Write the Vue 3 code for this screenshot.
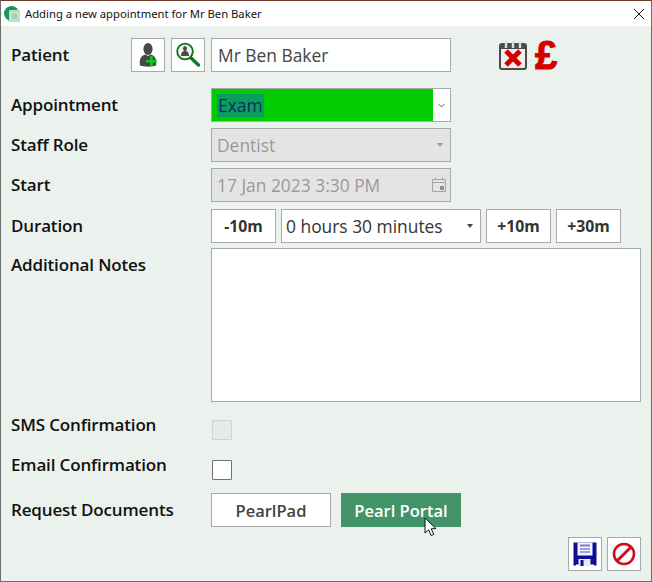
<script setup>
const durationButtons = ['+10m', '+30m']
</script>

<template>
  <div class="window">
    <header class="titlebar">
      <svg class="app-icon" width="16" height="16" viewBox="0 0 16 16">
        <circle cx="7.5" cy="7.5" r="7.5" fill="#0f9a5c" />
        <rect x="5" y="4" width="11" height="12" rx="1" fill="#bcdcc8" />
        <rect x="7" y="7" width="7" height="7" fill="#a5cfb3" stroke="#d6e9dc" />
      </svg>
      <span class="title">Adding a new appointment for Mr Ben Baker</span>
      <svg class="close" width="12" height="12" viewBox="0 0 12 12">
        <path d="M1 1 L11 11 M11 1 L1 11" stroke="#111" stroke-width="1" fill="none" />
      </svg>
    </header>

    <main class="form">
      <section class="row patient-row">
        <label class="label patient-label">Patient</label>
        <div class="patient-controls">
          <button class="icon-btn">
            <svg width="24" height="26" viewBox="0 0 24 26">
              <ellipse cx="12" cy="7" rx="4.6" ry="6" fill="#474747" />
              <path d="M4 23.5 C3 17 5 13.5 9.5 12.5 L12 14 L14.5 12.5 C19 13.5 21 17 20 23.5 C16 25 8 25 4 23.5 Z" fill="#474747" />
              <path d="M15.4 14 V24.5 M10 19.2 H20.8" stroke="#17c52b" stroke-width="2.6" fill="none" />
            </svg>
          </button>
          <button class="icon-btn">
            <svg width="26" height="26" viewBox="0 0 26 26">
              <path d="M15 15 L23.5 23" stroke="#0f7a1d" stroke-width="3.4" stroke-linecap="round" />
              <circle cx="10" cy="9.5" r="7.8" fill="#eef3ee" stroke="#0c6f12" stroke-width="1.8" />
              <ellipse cx="10" cy="6.6" rx="2" ry="2.6" fill="#4a4a4a" />
              <path d="M6 14 C6 10 8 9 10 9 C12 9 14 10 14 14 Z" fill="#4a4a4a" />
            </svg>
          </button>
          <div class="field patient-name">Mr Ben Baker</div>
          <svg class="cal-x" width="28" height="30" viewBox="0 0 28 30">
            <rect x="1" y="4" width="26" height="25" rx="2" fill="#f0f0f0" stroke="#4a4a4a" stroke-width="2" />
            <rect x="1" y="4" width="26" height="5" fill="#4a4a4a" />
            <path d="M7 1 v7 M14 1 v7 M21 1 v7" stroke="#dcdcdc" stroke-width="2.5" />
            <path d="M7 11 L21 25 M21 11 L7 25" stroke="#d40000" stroke-width="5" />
          </svg>
          <span class="pound">£</span>
        </div>
      </section>

      <section class="row appointment-row">
        <label class="label">Appointment</label>
        <div class="field select appointment">
          <div class="green"><span class="selected">Exam</span></div>
          <svg class="chevron" width="7" height="5" viewBox="0 0 7 5">
            <path d="M0.5 1 L3.5 4 L6.5 1" fill="none" stroke="#666" stroke-width="1" />
          </svg>
        </div>
      </section>

      <section class="row staff-row">
        <label class="label">Staff Role</label>
        <div class="field select disabled">
          <span>Dentist</span>
          <i class="caret caret-muted"></i>
        </div>
      </section>

      <section class="row start-row">
        <label class="label">Start</label>
        <div class="field select disabled">
          <span>17 Jan 2023 3:30 PM</span>
          <svg class="date-icon" width="14" height="15" viewBox="0 0 14 15">
            <path d="M0.5 2.5 H13.5 V14.5 H0.5 Z M0.5 5.5 H13.5" fill="none" stroke="#a4a4a4" />
            <path d="M3.5 0.5 V3 M10.5 0.5 V3" stroke="#a4a4a4" />
            <rect x="8" y="9" width="4" height="4" fill="#8f8f8f" />
          </svg>
        </div>
      </section>

      <section class="row duration-row">
        <label class="label">Duration</label>
        <div class="duration-controls">
          <button class="step">-10m</button>
          <div class="field select duration">
            <span>0 hours 30 minutes</span>
            <i class="caret"></i>
          </div>
          <button v-for="item in durationButtons" :key="item" class="step">{{ item }}</button>
        </div>
      </section>

      <section class="row notes-row">
        <label class="label">Additional Notes</label>
        <textarea class="notes"></textarea>
      </section>

      <section class="row sms-row">
        <label class="label">SMS Confirmation</label>
        <span class="check check-disabled"></span>
      </section>

      <section class="row email-row">
        <label class="label">Email Confirmation</label>
        <span class="check"></span>
      </section>

      <section class="row docs-row">
        <label class="label">Request Documents</label>
        <div class="docs">
          <button class="doc">PearlPad</button>
          <button class="doc doc-active">Pearl Portal</button>
          <svg class="cursor" width="15" height="20" viewBox="0 0 15 20">
            <path d="M1 1 V16 L4.6 12.8 L7.2 18.6 L9.8 17.4 L7.2 11.8 L12 11.6 Z" fill="#fff" stroke="#111" stroke-width="1" />
          </svg>
        </div>
      </section>

      <footer class="actions">
        <button class="icon-btn">
          <svg width="24" height="24" viewBox="0 0 24 24">
            <path d="M0.5 0.5 H23.5 V23.5 H21 V22.5 H3 V23.5 H0.5 Z" fill="#0d0d96" />
            <rect x="4.5" y="0.5" width="15" height="13" fill="#f2f4fb" />
            <path d="M7 3.5 H17" stroke="#7b7bd0" stroke-width="2" />
            <path d="M7 7 H17 M7 10 H17" stroke="#4b4bb8" stroke-width="1" />
            <rect x="5.5" y="17" width="12" height="7" fill="#e8eaf6" />
            <rect x="7.5" y="18" width="3" height="6" fill="#0d0d96" />
          </svg>
        </button>
        <button class="icon-btn">
          <svg width="26" height="26" viewBox="0 0 26 26">
            <circle cx="13" cy="13" r="10" fill="#fff" stroke="#cc0f1c" stroke-width="2.6" />
            <path d="M6.5 19.5 L19.5 6.5" stroke="#cc0f1c" stroke-width="3" />
          </svg>
        </button>
      </footer>
    </main>
  </div>
</template>

<style>
html, body { margin: 0; padding: 0; background: #ebf1ed; }
</style>

<style scoped>
* { box-sizing: border-box; }

.window {
  width: 652px;
  height: 582px;
  display: flex;
  flex-direction: column;
  overflow: hidden;
  position: relative;
  background: #ebf1ed;
  border-top: 1px solid #6e3a2a;
  border-left: 1px solid #6d6d6d;
  border-right: 1px solid #6d6d6d;
  border-bottom: 1px solid #6d6d6d;
  font-family: "Open Sans", "Noto Sans", sans-serif;
  color: #111;
}

.titlebar {
  height: 25px;
  flex: none;
  display: flex;
  align-items: center;
  background: #fff;
  padding-left: 3px;
}
.app-icon { margin-right: 5px; flex: none; }
.title { font: 11.25px/16px "Noto Sans", sans-serif; color: #111; }
.close { margin-left: auto; margin-right: 6px; }

.form {
  flex: 1;
  padding: 12px 10px 0 10px;
  display: flex;
  flex-direction: column;
}

.row { display: flex; align-items: flex-start; flex: none; }
.label {
  width: 200px;
  flex: none;
  font: 600 17px/34px "Open Sans", sans-serif;
  letter-spacing: -0.15px;
  color: #111;
  white-space: nowrap;
}

.patient-row { height: 34px; }
.patient-label { width: 120px; }
.patient-controls { display: flex; align-items: center; }
.patient-controls .icon-btn + .icon-btn { margin-left: 6px; }
.patient-name {
  margin-left: 6px;
  color: #444;
  padding-left: 6px;
  font-size: 17.6px;
  font-weight: 500;
}
.cal-x { margin-left: 48px; }
.pound {
  font: bold 40px/34px "Liberation Sans", sans-serif;
  -webkit-text-stroke: 1px #d40000;
  color: #d40000;
  margin-left: 8px;
}

.appointment-row { margin-top: 16px; }
.staff-row { margin-top: 6px; }
.start-row { margin-top: 6px; }
.duration-row { margin-top: 7px; }
.notes-row { margin-top: 5px; }
.sms-row { margin-top: 6px; }
.email-row { margin-top: 6px; }
.docs-row { margin-top: 11px; }

.field {
  width: 240px;
  height: 34px;
  border: 1px solid #a9a9a9;
  background: #fff;
  display: flex;
  align-items: center;
  font-size: 17.4px;
  white-space: nowrap;
}

.select { position: relative; padding-left: 5px; color: #333; }

.appointment { padding-left: 0; }
.green {
  width: 221px;
  height: 100%;
  background: #00cc00;
  display: flex;
  align-items: center;
  padding-left: 5px;
}
.selected {
  background: #0a9e5e;
  color: #0b2f5a;
  line-height: 23px;
  padding: 0 1px;
}
.chevron { position: absolute; right: 5px; top: 14px; }

.disabled { background: #e4e4e4; color: #9a9a9a; }

.caret {
  position: absolute;
  right: 7px;
  top: 14px;
  width: 0;
  height: 0;
  border-left: 3px solid transparent;
  border-right: 3px solid transparent;
  border-top: 4px solid #444;
}
.caret-muted { border-top-color: #999; }
.date-icon { position: absolute; right: 4px; top: 8px; }

.duration-controls { display: flex; gap: 5px; }
.duration { width: 200px; padding-left: 4px; }

button {
  background: #fff;
  border: 1px solid #a9a9a9;
  font-family: "Open Sans", sans-serif;
  padding: 0;
  margin: 0;
}
.step {
  width: 65px;
  height: 34px;
  font-size: 15.8px;
  font-weight: 700;
  color: #333;
}

.icon-btn {
  width: 34px;
  height: 34px;
  display: flex;
  align-items: center;
  justify-content: center;
  flex: none;
}

.notes {
  width: 430px;
  height: 154px;
  border: 1px solid #a9a9a9;
  background: #fff;
  resize: none;
  margin: 0;
  display: block;
}

.check {
  display: block;
  width: 20px;
  height: 20px;
  margin: 12px 0 0 1px;
  background: #fff;
  border: 1px solid #6f6f6f;
  border-radius: 1px;
}
.check-disabled { background: #e8eae9; border-color: #cfd3d1; }

.docs { display: flex; gap: 10px; position: relative; }
.doc {
  width: 120px;
  height: 34px;
  font-size: 16.5px;
  font-weight: 600;
  color: #444;
}
.doc-active { background: #429468; border-color: #429468; color: #fff; }
.cursor { position: absolute; left: 213px; top: 24px; }

.actions {
  margin-top: 10px;
  display: flex;
  justify-content: flex-end;
  gap: 5px;
  padding-right: 0;
}
</style>
